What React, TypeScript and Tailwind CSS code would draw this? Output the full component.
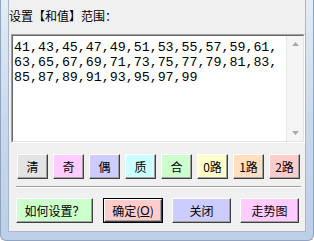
import React from 'react';

const cjk = { fontFamily: '"Noto Sans CJK SC", "Liberation Sans", sans-serif' };

const rows = [
  '41,43,45,47,49,51,53,55,57,59,61,',
  '63,65,67,69,71,73,75,77,79,81,83,',
  '85,87,89,91,93,95,97,99',
];

const quick = [
  { label: '清', bg: 'bg-[#e3e3e3]' },
  { label: '奇', bg: 'bg-[#ffccff]' },
  { label: '偶', bg: 'bg-[#ccccff]' },
  { label: '质', bg: 'bg-[#ccffff]' },
  { label: '合', bg: 'bg-[#ccffcc]' },
  { label: '0路', bg: 'bg-[#ffffcc]' },
  { label: '1路', bg: 'bg-[#ffdfc0]' },
  { label: '2路', bg: 'bg-[#ffcccc]' },
];

function WinButton({ children, className }: { children: React.ReactNode; className: string }) {
  return (
    <div
      className={`flex items-center justify-center text-[12px] text-black border border-t-white border-l-white border-r-[#404040] border-b-[#404040] shadow-[inset_-1px_-1px_0_#a0a0a0] ${className}`}
      style={cjk}
    >
      {children}
    </div>
  );
}

export default function App() {
  return (
    <div className="w-[314px] h-[241px] flex px-[7px] pb-[8px] bg-gradient-to-b from-[#e4ebf4] via-[#c9d9ec] to-[#bccfe6] border-x border-b border-[#8ea4bf] rounded-b-[6px]">
      <div className="flex-1 flex flex-col bg-[#f0f0f0] border-x border-b border-[#a9b8c9]">
        {/* label */}
        <div className="mt-[8px] text-[12px] leading-[16px] text-black whitespace-nowrap" style={cjk}>
          设置【和值】范围：
        </div>

        {/* number box */}
        <div className="mt-[10px] ml-[2px] w-[294px] h-[109px] flex border border-t-[#a0a0a0] border-l-[#a0a0a0] border-r-white border-b-white">
          <div className="flex-1 flex bg-white border border-t-[#696969] border-l-[#696969] border-r-[#e3e3e3] border-b-[#e3e3e3]">
            <div
              className="flex-1 pt-[4px] pl-[1px] text-[13.3px] leading-[15px] text-black"
              style={{ fontFamily: '"Liberation Mono", monospace' }}
            >
              {rows.map((r) => (
                <div key={r} className="whitespace-pre">{r}</div>
              ))}
            </div>
            <div className="w-[17px] flex flex-col items-center justify-between bg-[#f5f5f5] border-l border-[#e6e6e6] py-[6px]">
              <svg width="7" height="4" viewBox="0 0 7 4">
                <path d="M0 4 L3.5 0 L7 4 Z" fill="#a8a8a8" />
              </svg>
              <svg width="7" height="4" viewBox="0 0 7 4">
                <path d="M0 0 L7 0 L3.5 4 Z" fill="#a8a8a8" />
              </svg>
            </div>
          </div>
        </div>

        {/* quick select buttons */}
        <div className="mt-[11px] ml-[8px] flex gap-[5px]">
          {quick.map((q) => (
            <WinButton key={q.label} className={`w-[31px] h-[25px] ${q.bg}`}>
              {q.label}
            </WinButton>
          ))}
        </div>

        {/* separator */}
        <div className="mt-[7px] ml-[7px] w-[285px] border-t border-b border-t-[#a0a0a0] border-b-white" />

        {/* action buttons */}
        <div className="mt-[10px] ml-[7px] flex">
          <WinButton className="w-[77px] h-[25px] bg-[#ccffcc]">如何设置？</WinButton>
          <div className="ml-[10px] w-[60px] h-[25px] flex border border-black">
            <WinButton className="flex-1 bg-[#ffcccc]">
              确定(<span className="underline" style={{ fontFamily: '"Liberation Sans", sans-serif' }}>O</span>)
            </WinButton>
          </div>
          <WinButton className="ml-[9px] w-[59px] h-[25px] bg-[#ccccff]">关闭</WinButton>
          <WinButton className="ml-[9px] w-[59px] h-[25px] bg-[#ffccff]">走势图</WinButton>
        </div>
      </div>
    </div>
  );
}
